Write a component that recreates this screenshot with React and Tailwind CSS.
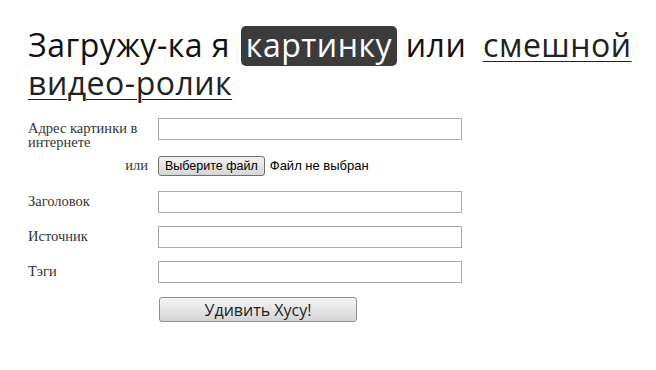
export default function App() {
  const heading = { fontFamily: '"Open Sans", "Noto Sans", sans-serif' };
  const serif = { fontFamily: '"Liberation Serif", "Times New Roman", serif' };
  const arial = { fontFamily: '"Liberation Sans", Arial, sans-serif' };

  const rows = ['Заголовок', 'Источник', 'Тэги'];

  return (
    <div className="w-[656px] h-[370px] bg-white pl-[28px] pt-[26px]">
      {/* Title */}
      <h1 className="text-[32px] leading-[33px] font-normal tracking-[0.5px] text-[#111] w-[620px]" style={heading}>
        Загружу-ка я{' '}
        <span className="inline-block bg-[#3b3b3b] text-white rounded-[5px] px-[5px] pt-[2px] pb-[5px] leading-[33px] ml-[2px]">картинку</span>
        {' '}или{' '}
        <a href="#" className="underline decoration-1 underline-offset-[4px] text-[#222] ml-[8px]">
          смешной видео-ролик
        </a>
      </h1>

      {/* Form */}
      <form className="mt-[19px] w-[434px] text-[14.5px] text-[#333]" style={serif}>
        <div className="flex items-start h-[22px]">
          <label className="w-[130px] shrink-0 leading-[14px] pt-[3px]">Адрес картинки в интернете</label>
          <input type="text" className="w-[304px] h-[22px] border border-[#a9a9a9] bg-white outline-none" />
        </div>

        <div className="flex items-center mt-[16px] h-[20px]">
          <span className="w-[130px] text-right pr-[10px]">или</span>
          <span
            className="h-[20px] px-[6px] flex items-center border border-[#707070] rounded-[3px] bg-gradient-to-b from-[#f2f2f2] to-[#d6d6d6] text-[12.5px] text-black"
            style={arial}
          >
            Выберите файл
          </span>
          <span className="ml-[5px] text-[13px] text-black" style={arial}>Файл не выбран</span>
        </div>

        {rows.map((label, i) => (
          <div key={label} className={`flex items-center ${i === 0 ? 'mt-[15px]' : 'mt-[13px]'}`}>
            <label className="w-[130px]">{label}</label>
            <input type="text" className="w-[304px] h-[22px] border border-[#a9a9a9] bg-white outline-none" />
          </div>
        ))}

        <div className="flex mt-[14px]">
          <div className="w-[131px]" />
          <button
            type="button"
            className="w-[198px] h-[25px] border border-[#8e8e8e] rounded-[3px] bg-gradient-to-b from-[#f6f6f6] to-[#d4d4d4] text-[16px] leading-[20px] text-[#222]"
            style={heading}
          >
            Удивить Хусу!
          </button>
        </div>
      </form>
    </div>
  );
}
